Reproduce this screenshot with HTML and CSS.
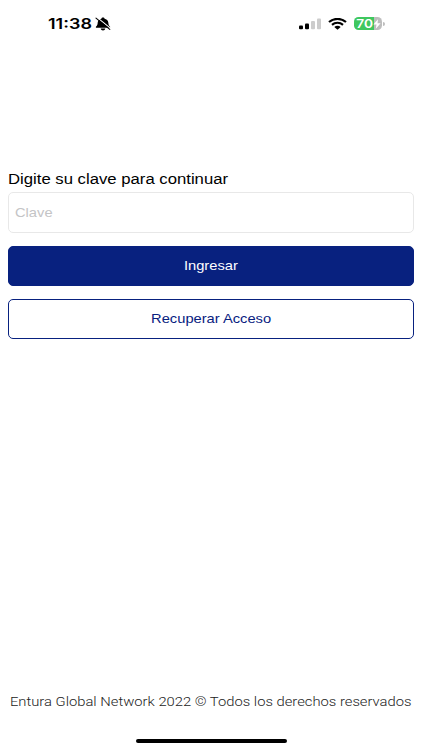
FILE: index.html
```html
<!DOCTYPE html>
<html lang="es">
<head>
    <meta charset="UTF-8">
    <meta name="viewport" content="width=device-width, initial-scale=1">
    <title>Entura</title>
    <link rel="stylesheet" href="styles.css">
</head>
<body>

<header class="status">
    <div class="status-left">
        <span class="time">11:38</span>
        <svg class="bell" width="16" height="14" viewBox="0 0 16 14">
            <path d="M.9 10.8V9.8C2.5 8.7 2.5 7.3 2.7 5.6C2.9 3.2 4.5 2 6.4 1.7C6.5.8 7.1.4 8 .4S9.5.8 9.6 1.7C11.5 2 13.1 3.2 13.3 5.6C13.5 7.3 13.5 8.7 15.1 9.8V10.8ZM5.7 11.5H10.3C10.1 12.8 9.2 13.4 8 13.4S5.9 12.8 5.7 11.5Z"/>
            <path d="M2.3.6L15.9 11.5" stroke="#fff" stroke-width="1.1"/>
            <path d="M1 1.1L14.8 12.4" stroke="#000" stroke-width="1.1" stroke-linecap="round"/>
        </svg>
    </div>
    <div class="status-right">
        <svg width="22" height="12" viewBox="0 0 22 12">
            <rect x="0" y="7.5" width="4" height="3.8" rx="1"/>
            <rect x="6" y="5.5" width="4" height="5.8" rx="1"/>
            <rect x="12" y="3" width="4" height="8.3" rx="1" fill="#ccc"/>
            <rect x="18" y=".4" width="4" height="10.9" rx="1" fill="#ccc"/>
        </svg>
        <svg class="wifi" width="19" height="12" viewBox="0 0 19 12">
            <path d="M1 4.1C5.6-.2 13.4-.2 18 4.1M4 6.9C7.1 4.1 11.9 4.1 15 6.9" fill="none" stroke="#000" stroke-width="2.1"/>
            <path d="M6.3 8.9C8.1 7.2 10.9 7.2 12.7 8.9L9.5 11.8Z"/>
        </svg>
        <div class="battery">
            <span class="level">70</span>
            <svg class="bolt" width="8" height="10" viewBox="0 0 8 10">
                <path d="M5 .2L.4 5.5H3.5L2.8 9.8L7.6 4.3H4.5Z" fill="#fff"/>
            </svg>
        </div>
        <span class="battery-tip"></span>
    </div>
</header>

<main class="login">
    <label class="label" for="clave"><span class="wide">Digite su clave para continuar</span></label>
    <div class="field"><input id="clave" class="wide" type="password" placeholder="Clave" autocomplete="off"></div>
    <button class="btn btn-primary"><span class="wide">Ingresar</span></button>
    <button class="btn btn-outline"><span class="wide">Recuperar Acceso</span></button>
</main>

<footer class="footer"><span class="wide">Entura Global Network 2022 © Todos los derechos reservados</span></footer>
<div class="home-bar"></div>

</body>
</html>
```
FILE: styles.css
```css
* {
    box-sizing: border-box;
}

body {
    margin: 0;
    height: 750px;
    display: flex;
    flex-direction: column;
    overflow: hidden;
    background: #fff;
    color: #111;
    font-family: "Liberation Sans", Arial, sans-serif;
}

svg {
    display: block;
    flex: none;
}

.wide {
    display: inline-block;
    white-space: nowrap;
    transform: scaleX(1.13);
}

.status {
    display: flex;
    justify-content: space-between;
    height: 48px;
    padding: 0 37px 0 48px;
}

.status-left,
.status-right {
    display: flex;
    align-items: center;
    height: 47px;
}

.time {
    width: 44px;
    font: 600 14.5px/20px Inter, sans-serif;
    color: #000;
    transform: scaleX(1.24);
    transform-origin: left;
}

.bell {
    margin-left: 3px;
}

.wifi {
    margin-left: 7px;
}

.battery {
    display: flex;
    align-items: center;
    width: 28px;
    height: 13px;
    margin-left: 7px;
    border-radius: 4.5px;
    background: linear-gradient(to right, #3fc75f 70%, #bdbdbd 70%);
}

.level {
    width: 17px;
    padding-left: 2px;
    font: 600 12px/13px Inter, sans-serif;
    color: #fff;
    transform: scaleX(1.14);
    transform-origin: left;
}

.bolt {
    margin-left: 2px;
}

.battery-tip {
    width: 2px;
    height: 4px;
    margin-left: 1px;
    border-radius: 0 2px 2px 0;
    background: #bdbdbd;
}

.login {
    display: flex;
    flex-direction: column;
    padding: 122px 8px 0;
}

.label {
    height: 22px;
    font: 400 14px/18px "Liberation Sans", Arial, sans-serif;
    color: #000;
}

.label .wide {
    transform: scaleX(1.193);
    transform-origin: left;
}

.field {
    height: 41px;
    padding: 0 6px;
    border: 1px solid #e8e8e8;
    border-radius: 5px;
}

.field input {
    width: 300px;
    height: 39px;
    padding: 0;
    border: 0;
    outline: none;
    background: transparent;
    font: 13px "Liberation Sans", Arial, sans-serif;
    transform-origin: left;
}

.field input::placeholder {
    color: #c4c4c6;
}

.btn {
    height: 40px;
    margin-top: 13px;
    padding: 0 0 1px;
    border: 1px solid #08217f;
    border-radius: 5px;
    font: 13px "Liberation Sans", Arial, sans-serif;
}

.btn-primary {
    background: #08217f;
    color: #fff;
}

.btn-outline {
    background: #fff;
    color: #08217f;
}

.footer {
    margin-top: auto;
    height: 46px;
    text-align: center;
    font: 300 13px/18px Roboto, sans-serif;
    color: #222;
}

.footer .wide {
    transform: scaleX(1.136);
}

.home-bar {
    width: 151px;
    height: 4px;
    margin: 0 auto 7px;
    border-radius: 2px;
    background: #000;
}
```
